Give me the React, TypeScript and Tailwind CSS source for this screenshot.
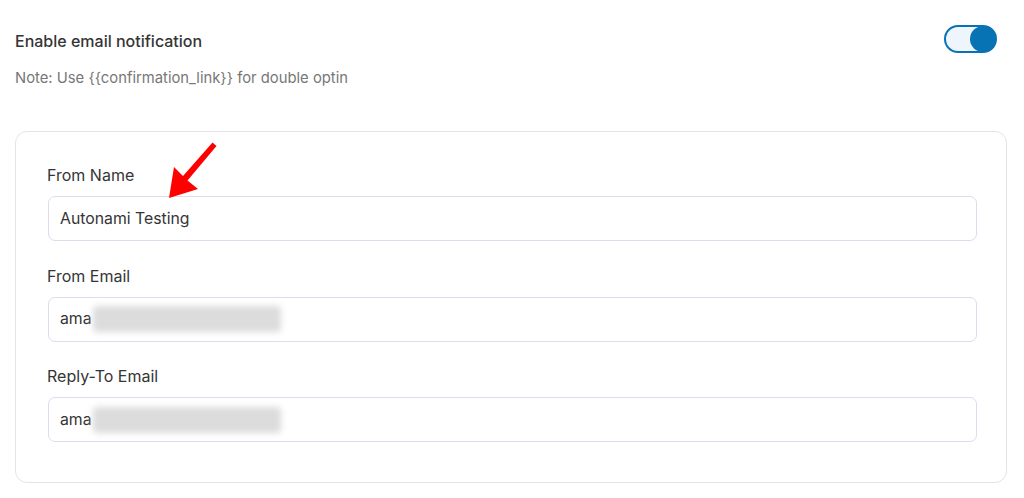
import { useState } from "react";

const fields = [
  { label: "From Name", value: "Autonami Testing", blurred: false },
  { label: "From Email", value: "ama", blurred: true },
  { label: "Reply-To Email", value: "ama", blurred: true },
];

export default function App() {
  const [enabled, setEnabled] = useState(true);

  return (
    <div
      className="relative w-[1024px] h-[498px] bg-white overflow-hidden text-[#353535]"
      style={{ fontFamily: "Inter, 'Liberation Sans', sans-serif" }}
    >
      <div className="flex items-start justify-between pl-[15px] pr-[27px] pt-[25px]">
        <div>
          <h2 className="mt-[4px] text-[16px] leading-[24px] font-medium">Enable email notification</h2>
          <p className="mt-[15px] text-[14.8px] leading-[20px] text-[#777777]">
            Note: Use {"{{confirmation_link}}"} for double optin
          </p>
        </div>
        <button
          onClick={() => setEnabled(!enabled)}
          className={`flex items-center w-[53px] h-[28px] rounded-full border-2 border-[#0873b4] bg-[#eef5fd] ${enabled ? "justify-end" : "justify-start"}`}
        >
          <span className="block w-[26px] h-[26px] rounded-full bg-[#0873b4] -mr-[1px]" />
        </button>
      </div>

      <div className="ml-[15px] mr-[17px] mt-[43px] h-[352px] rounded-[12px] border border-[#e4e3ec] pt-[32px] pl-[31px] pr-[29px]">
        {fields.map((f, i) => (
          <div key={f.label} className={i > 0 ? "mt-[23.5px]" : ""}>
            <label className="block text-[16px] leading-[22px]">{f.label}</label>
            <div className="mt-[10px] ml-[1px] flex items-center h-[45px] rounded-[7px] border border-[#dedbec] bg-white pl-[11px]">
              <span className="text-[15.8px]">{f.value}</span>
              {f.blurred && (
                <span className="ml-[1px] block w-[188px] h-[26px] bg-[#dcdcdc] blur-[3px] rounded-sm" />
              )}
            </div>
          </div>
        ))}
      </div>

      <svg className="absolute left-0 top-0" width="1024" height="498" viewBox="0 0 1024 498">
        <path
          d="M169 198 L174 167 L183 176 L212.5 142.5 L216.5 146 L187.5 180.5 L198 189 Z"
          fill="#ff0000"
        />
      </svg>
    </div>
  );
}
